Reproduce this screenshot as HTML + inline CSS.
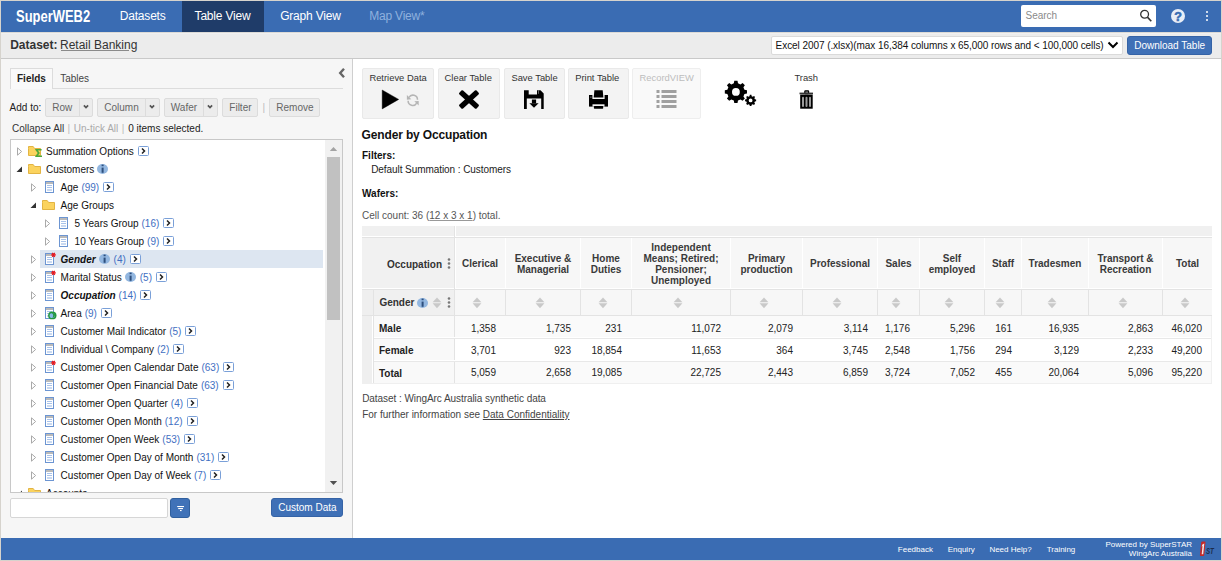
<!DOCTYPE html>
<html><head><meta charset="utf-8"><title>SuperWEB2</title>
<style>
html,body{margin:0;padding:0;}
body{width:1222px;height:561px;overflow:hidden;position:relative;font-family:"Liberation Sans", sans-serif;}
.b{position:absolute;}
.t{position:absolute;white-space:nowrap;font-family:"Liberation Sans", sans-serif;}
svg.b{overflow:visible;}
</style></head><body>
<div class="b" style="left:0px;top:0px;width:1222px;height:561px;background:#d6d3cd;"></div>
<div class="b" style="left:1px;top:1px;width:1220px;height:559px;background:#fff;"></div>
<div class="b" style="left:1px;top:1px;width:1220px;height:31px;background:#3a6cb3;"></div>
<div class="b" style="left:182px;top:1px;width:82px;height:31px;background:#1f3c69;"></div>
<div class="t" style="left:15.8px;top:6.5px;font-size:16px;line-height:20px;font-weight:700;color:#fff;transform:scaleX(0.81);transform-origin:0 0;">SuperWEB2</div>
<div class="t" style="left:119.80px;top:9.64px;font-size:12px;line-height:13.8px;color:#fff;letter-spacing:-0.2px;">Datasets</div>
<div class="t" style="left:194.60px;top:9.64px;font-size:12px;line-height:13.8px;color:#fff;letter-spacing:-0.2px;">Table View</div>
<div class="t" style="left:280.20px;top:9.64px;font-size:12px;line-height:13.8px;color:#fff;letter-spacing:-0.2px;">Graph View</div>
<div class="t" style="left:369.20px;top:9.64px;font-size:12px;line-height:13.8px;color:#8fb1de;letter-spacing:-0.2px;">Map View*</div>
<div class="b" style="left:1021px;top:5px;width:135px;height:22px;background:#fff;border-radius:2px;"></div>
<div class="t" style="left:1025.50px;top:10.48px;font-size:10px;line-height:11.5px;color:#8a8a8a;">Search</div>
<svg class="b" style="left:1138px;top:8px;" width="16" height="16" viewBox="0 0 16 16"><circle cx="6.6" cy="6.3" r="3.9" fill="none" stroke="#333" stroke-width="1.3"/><line x1="9.4" y1="9.1" x2="13.3" y2="13.2" stroke="#333" stroke-width="1.6"/></svg>
<svg class="b" style="left:1170px;top:8px;" width="16" height="16" viewBox="0 0 16 16"><circle cx="8" cy="8" r="7" fill="#e9eef7"/><text x="8" y="12.6" text-anchor="middle" font-family="Liberation Sans" font-weight="700" font-size="12.5" fill="#3a6cb3" stroke="#3a6cb3" stroke-width="0.6">?</text></svg>
<div class="b" style="left:1206px;top:10.8px;width:2.2px;height:2.2px;background:#fff;border-radius:1px;"></div>
<div class="b" style="left:1206px;top:14.8px;width:2.2px;height:2.2px;background:#fff;border-radius:1px;"></div>
<div class="b" style="left:1206px;top:18.9px;width:2.2px;height:2.2px;background:#fff;border-radius:1px;"></div>
<div class="b" style="left:1px;top:32px;width:1220px;height:26px;background:#ececec;"></div>
<div class="b" style="left:1px;top:32px;width:1220px;height:1px;background:#dcdad6;"></div>
<div class="b" style="left:1px;top:33px;width:1220px;height:1px;background:#f0f0f0;"></div>
<div class="b" style="left:1px;top:58px;width:1220px;height:1px;background:#c9c9c9;"></div>
<div class="t" style="left:10.20px;top:38.64px;font-size:12px;line-height:13.8px;color:#333;font-weight:700;">Dataset:</div>
<div class="t" style="left:60.00px;top:38.64px;font-size:12px;line-height:13.8px;color:#333;">Retail Banking</div>
<div class="b" style="left:60.5px;top:49.5px;width:68px;height:1px;background:#8a8a8a;"></div>
<div class="b" style="left:771px;top:36px;width:352px;height:19px;background:#fff;border:1px solid #dadada;border-radius:2px;box-sizing:border-box;"></div>
<div class="t" style="left:775.60px;top:40.39px;font-size:10px;line-height:11.5px;color:#111;letter-spacing:-0.065px;">Excel 2007 (.xlsx)(max 16,384 columns x 65,000 rows and &lt; 100,000 cells)</div>
<svg class="b" style="left:1107px;top:41px;" width="12" height="8" viewBox="0 0 12 8"><polyline points="1.5,1.5 6,6 10.5,1.5" fill="none" stroke="#000" stroke-width="2"/></svg>
<div class="b" style="left:1127px;top:36px;width:85px;height:19px;background:#3f70b6;border:1px solid #3563a6;border-radius:3px;box-sizing:border-box;"></div>
<div class="t" style="left:1134.20px;top:39.69px;font-size:10px;line-height:11.5px;color:#fff;">Download Table</div>
<div class="b" style="left:1px;top:59px;width:351px;height:479px;background:#f6f6f6;"></div>
<div class="b" style="left:352px;top:59px;width:1px;height:479px;background:#cfcfcf;"></div>
<div class="b" style="left:10px;top:88px;width:333px;height:1px;background:#dcdcdc;"></div>
<div class="b" style="left:10px;top:68px;width:43px;height:21px;background:#f9f9f9;border:1px solid #dcdcdc;border-bottom:none;box-sizing:border-box;"></div>
<div class="t" style="left:17.00px;top:72.58px;font-size:10px;line-height:11.5px;color:#222;font-weight:700;">Fields</div>
<div class="t" style="left:60.20px;top:72.58px;font-size:10px;line-height:11.5px;color:#444;">Tables</div>
<svg class="b" style="left:337px;top:67px;" width="10" height="12" viewBox="0 0 10 12"><polyline points="7,1.8 3.2,6 7,10.2" fill="none" stroke="#666" stroke-width="2.4"/></svg>
<div class="t" style="left:9.60px;top:102.48px;font-size:10px;line-height:11.5px;color:#222;">Add to:</div>
<div class="b" style="left:45px;top:98px;width:48px;height:19px;background:#ececec;border:1px solid #dcdcdc;border-radius:2px;box-sizing:border-box;"></div>
<div class="b" style="left:79px;top:98px;width:1px;height:19px;background:#dcdcdc;"></div>
<svg class="b" style="left:83px;top:103px;" width="9" height="7" viewBox="0 0 9 7"><polyline points="0.9,2.4 3,4.6 5.1,2.4" fill="none" stroke="#555" stroke-width="1.7"/></svg>
<div class="t" style="left:52.20px;top:102.48px;font-size:10px;line-height:11.5px;color:#666;">Row</div>
<div class="b" style="left:97px;top:98px;width:63px;height:19px;background:#ececec;border:1px solid #dcdcdc;border-radius:2px;box-sizing:border-box;"></div>
<div class="b" style="left:145px;top:98px;width:1px;height:19px;background:#dcdcdc;"></div>
<svg class="b" style="left:149px;top:103px;" width="9" height="7" viewBox="0 0 9 7"><polyline points="0.9,2.4 3,4.6 5.1,2.4" fill="none" stroke="#555" stroke-width="1.7"/></svg>
<div class="t" style="left:104.30px;top:102.48px;font-size:10px;line-height:11.5px;color:#666;">Column</div>
<div class="b" style="left:164px;top:98px;width:54px;height:19px;background:#ececec;border:1px solid #dcdcdc;border-radius:2px;box-sizing:border-box;"></div>
<div class="b" style="left:203px;top:98px;width:1px;height:19px;background:#dcdcdc;"></div>
<svg class="b" style="left:207px;top:103px;" width="9" height="7" viewBox="0 0 9 7"><polyline points="0.9,2.4 3,4.6 5.1,2.4" fill="none" stroke="#555" stroke-width="1.7"/></svg>
<div class="t" style="left:170.80px;top:102.48px;font-size:10px;line-height:11.5px;color:#666;">Wafer</div>
<div class="b" style="left:222px;top:98px;width:36px;height:19px;background:#ececec;border:1px solid #dcdcdc;border-radius:2px;box-sizing:border-box;"></div>
<div class="t" style="left:229.30px;top:102.48px;font-size:10px;line-height:11.5px;color:#666;">Filter</div>
<div class="t" style="left:262.40px;top:102.48px;font-size:10px;line-height:11.5px;color:#bbb;">|</div>
<div class="b" style="left:269px;top:98px;width:51px;height:19px;background:#ececec;border:1px solid #dcdcdc;border-radius:2px;box-sizing:border-box;"></div>
<div class="t" style="left:276.30px;top:102.48px;font-size:10px;line-height:11.5px;color:#666;">Remove</div>
<div class="t" style="left:12.00px;top:123.38px;font-size:10px;line-height:11.5px;color:#333;">Collapse All</div>
<div class="t" style="left:67.40px;top:123.38px;font-size:10px;line-height:11.5px;color:#bbb;">|</div>
<div class="t" style="left:73.80px;top:123.38px;font-size:10px;line-height:11.5px;color:#aaa;">Un-tick All</div>
<div class="t" style="left:121.80px;top:123.38px;font-size:10px;line-height:11.5px;color:#bbb;">|</div>
<div class="t" style="left:128.20px;top:123.38px;font-size:10px;line-height:11.5px;color:#222;">0 items selected.</div>
<div class="b" style="left:10px;top:139px;width:333px;height:354px;background:#fff;border:1px solid #c8c8c8;box-sizing:border-box;"></div>
<div class="b" style="left:11px;top:140px;width:314px;height:352px;overflow:hidden;">
<svg class="b" style="left:6px;top:7px;" width="6" height="9" viewBox="0 0 6 9"><polygon points="0.5,0.8 4.6,4.5 0.5,8.2" fill="none" stroke="#a9a9a9" stroke-width="1"/></svg>
<svg class="b" style="left:17px;top:6px;" width="15" height="12" viewBox="0 0 15 12"><path d="M0.5,2.5 L0.5,9.5 L12.5,9.5 L12.5,2.5 L6.6,2.5 L5.2,0.5 L0.5,0.5 Z" fill="#fbd35e" stroke="#e2b443" stroke-width="1"/><path d="M7.2,3 H13.6 V4.5 L9.9,4.5 L11.9,7 L9.9,9.4 L14,9.4 V11 H7.2 L7.2,10.2 L9.7,7 L7.2,3.8Z" fill="#4ea83a"/></svg>
<div class="t" style="left:35.00px;top:4.70px;font-size:10px;line-height:13px;color:#111;"><span style="">Summation Options</span><svg width="11" height="10" viewBox="0 0 11 10" style="vertical-align:-1px;margin-left:4px"><rect x="0.5" y="0.5" width="10" height="9" rx="1" fill="#fff" stroke="#7aa0d8"/><polyline points="4,2.5 6.5,5 4,7.5" fill="none" stroke="#222" stroke-width="1.5"/></svg></div>
<svg class="b" style="left:5px;top:26px;" width="7" height="7" viewBox="0 0 7 7"><polygon points="6,0.5 6,6 0.5,6" fill="#333"/></svg>
<svg class="b" style="left:17px;top:24px;" width="15" height="12" viewBox="0 0 15 12"><path d="M0.5,2.5 L0.5,9.5 L12.5,9.5 L12.5,2.5 L6.6,2.5 L5.2,0.5 L0.5,0.5 Z" fill="#fbd35e" stroke="#e2b443" stroke-width="1"/></svg>
<div class="t" style="left:35.00px;top:22.70px;font-size:10px;line-height:13px;color:#111;"><span style="">Customers</span><svg width="11" height="10" viewBox="0 0 11 10" style="vertical-align:-1px;margin-left:3px"><ellipse cx="5.5" cy="5" rx="5.5" ry="5" fill="#93b7e0"/><rect x="4.6" y="3.6" width="2" height="5.2" fill="#2d4f7d"/><rect x="4.6" y="0.6" width="2" height="1.6" fill="#2d4f7d"/></svg></div>
<svg class="b" style="left:20px;top:43px;" width="6" height="9" viewBox="0 0 6 9"><polygon points="0.5,0.8 4.6,4.5 0.5,8.2" fill="none" stroke="#a9a9a9" stroke-width="1"/></svg>
<svg class="b" style="left:34px;top:41px;" width="12" height="13" viewBox="0 0 12 13"><rect x="0.5" y="0.5" width="8" height="11" fill="#fff" stroke="#6c95d2" stroke-width="1"/><rect x="1" y="1" width="7" height="2" fill="#b9b9b9"/><rect x="2" y="4" width="5" height="1" fill="#a9c3ea"/><rect x="2" y="6" width="5" height="1" fill="#a9c3ea"/><rect x="2" y="8" width="5" height="2" fill="#c9d9f1"/></svg>
<div class="t" style="left:49.60px;top:40.70px;font-size:10px;line-height:13px;color:#111;"><span style="">Age</span><span style="color:#3f6fc2;margin-left:3px">(99)</span><svg width="11" height="10" viewBox="0 0 11 10" style="vertical-align:-1px;margin-left:4px"><rect x="0.5" y="0.5" width="10" height="9" rx="1" fill="#fff" stroke="#7aa0d8"/><polyline points="4,2.5 6.5,5 4,7.5" fill="none" stroke="#222" stroke-width="1.5"/></svg></div>
<svg class="b" style="left:19px;top:62px;" width="7" height="7" viewBox="0 0 7 7"><polygon points="6,0.5 6,6 0.5,6" fill="#333"/></svg>
<svg class="b" style="left:31px;top:60px;" width="15" height="12" viewBox="0 0 15 12"><path d="M0.5,2.5 L0.5,9.5 L12.5,9.5 L12.5,2.5 L6.6,2.5 L5.2,0.5 L0.5,0.5 Z" fill="#fbd35e" stroke="#e2b443" stroke-width="1"/></svg>
<div class="t" style="left:49.60px;top:58.70px;font-size:10px;line-height:13px;color:#111;"><span style="">Age Groups</span></div>
<svg class="b" style="left:34px;top:79px;" width="6" height="9" viewBox="0 0 6 9"><polygon points="0.5,0.8 4.6,4.5 0.5,8.2" fill="none" stroke="#a9a9a9" stroke-width="1"/></svg>
<svg class="b" style="left:48px;top:77px;" width="12" height="13" viewBox="0 0 12 13"><rect x="0.5" y="0.5" width="8" height="11" fill="#fff" stroke="#6c95d2" stroke-width="1"/><rect x="1" y="1" width="7" height="2" fill="#b9b9b9"/><rect x="2" y="4" width="5" height="1" fill="#a9c3ea"/><rect x="2" y="6" width="5" height="1" fill="#a9c3ea"/><rect x="2" y="8" width="5" height="2" fill="#c9d9f1"/></svg>
<div class="t" style="left:63.60px;top:76.70px;font-size:10px;line-height:13px;color:#111;"><span style="">5 Years Group</span><span style="color:#3f6fc2;margin-left:3px">(16)</span><svg width="11" height="10" viewBox="0 0 11 10" style="vertical-align:-1px;margin-left:4px"><rect x="0.5" y="0.5" width="10" height="9" rx="1" fill="#fff" stroke="#7aa0d8"/><polyline points="4,2.5 6.5,5 4,7.5" fill="none" stroke="#222" stroke-width="1.5"/></svg></div>
<svg class="b" style="left:34px;top:97px;" width="6" height="9" viewBox="0 0 6 9"><polygon points="0.5,0.8 4.6,4.5 0.5,8.2" fill="none" stroke="#a9a9a9" stroke-width="1"/></svg>
<svg class="b" style="left:48px;top:95px;" width="12" height="13" viewBox="0 0 12 13"><rect x="0.5" y="0.5" width="8" height="11" fill="#fff" stroke="#6c95d2" stroke-width="1"/><rect x="1" y="1" width="7" height="2" fill="#b9b9b9"/><rect x="2" y="4" width="5" height="1" fill="#a9c3ea"/><rect x="2" y="6" width="5" height="1" fill="#a9c3ea"/><rect x="2" y="8" width="5" height="2" fill="#c9d9f1"/></svg>
<div class="t" style="left:63.60px;top:94.70px;font-size:10px;line-height:13px;color:#111;"><span style="">10 Years Group</span><span style="color:#3f6fc2;margin-left:3px">(9)</span><svg width="11" height="10" viewBox="0 0 11 10" style="vertical-align:-1px;margin-left:4px"><rect x="0.5" y="0.5" width="10" height="9" rx="1" fill="#fff" stroke="#7aa0d8"/><polyline points="4,2.5 6.5,5 4,7.5" fill="none" stroke="#222" stroke-width="1.5"/></svg></div>
<div class="b" style="left:29px;top:110px;width:283px;height:18px;background:#dde6f1;"></div>
<svg class="b" style="left:20px;top:115px;" width="6" height="9" viewBox="0 0 6 9"><polygon points="0.5,0.8 4.6,4.5 0.5,8.2" fill="none" stroke="#a9a9a9" stroke-width="1"/></svg>
<svg class="b" style="left:34px;top:113px;" width="12" height="13" viewBox="0 0 12 13"><rect x="0.5" y="0.5" width="8" height="11" fill="#fff" stroke="#6c95d2" stroke-width="1"/><rect x="1" y="1" width="7" height="2" fill="#b9b9b9"/><rect x="2" y="4" width="5" height="1" fill="#a9c3ea"/><rect x="2" y="6" width="5" height="1" fill="#a9c3ea"/><rect x="2" y="8" width="5" height="2" fill="#c9d9f1"/><g transform="translate(8.5,1.9)" stroke="#e8151b" stroke-width="1.3"><line x1="-2.3" y1="0" x2="2.3" y2="0"/><line x1="-1.2" y1="-2" x2="1.2" y2="2"/><line x1="-1.2" y1="2" x2="1.2" y2="-2"/></g></svg>
<div class="t" style="left:49.60px;top:112.70px;font-size:10px;line-height:13px;color:#111;"><span style="font-weight:700;font-style:italic;">Gender</span><svg width="11" height="10" viewBox="0 0 11 10" style="vertical-align:-1px;margin-left:3px"><ellipse cx="5.5" cy="5" rx="5.5" ry="5" fill="#93b7e0"/><rect x="4.6" y="3.6" width="2" height="5.2" fill="#2d4f7d"/><rect x="4.6" y="0.6" width="2" height="1.6" fill="#2d4f7d"/></svg><span style="color:#3f6fc2;margin-left:4px">(4)</span><svg width="11" height="10" viewBox="0 0 11 10" style="vertical-align:-1px;margin-left:4px"><rect x="0.5" y="0.5" width="10" height="9" rx="1" fill="#fff" stroke="#7aa0d8"/><polyline points="4,2.5 6.5,5 4,7.5" fill="none" stroke="#222" stroke-width="1.5"/></svg></div>
<svg class="b" style="left:20px;top:133px;" width="6" height="9" viewBox="0 0 6 9"><polygon points="0.5,0.8 4.6,4.5 0.5,8.2" fill="none" stroke="#a9a9a9" stroke-width="1"/></svg>
<svg class="b" style="left:34px;top:131px;" width="12" height="13" viewBox="0 0 12 13"><rect x="0.5" y="0.5" width="8" height="11" fill="#fff" stroke="#6c95d2" stroke-width="1"/><rect x="1" y="1" width="7" height="2" fill="#b9b9b9"/><rect x="2" y="4" width="5" height="1" fill="#a9c3ea"/><rect x="2" y="6" width="5" height="1" fill="#a9c3ea"/><rect x="2" y="8" width="5" height="2" fill="#c9d9f1"/><g transform="translate(8.5,1.9)" stroke="#e8151b" stroke-width="1.3"><line x1="-2.3" y1="0" x2="2.3" y2="0"/><line x1="-1.2" y1="-2" x2="1.2" y2="2"/><line x1="-1.2" y1="2" x2="1.2" y2="-2"/></g></svg>
<div class="t" style="left:49.60px;top:130.70px;font-size:10px;line-height:13px;color:#111;"><span style="">Marital Status</span><svg width="11" height="10" viewBox="0 0 11 10" style="vertical-align:-1px;margin-left:3px"><ellipse cx="5.5" cy="5" rx="5.5" ry="5" fill="#93b7e0"/><rect x="4.6" y="3.6" width="2" height="5.2" fill="#2d4f7d"/><rect x="4.6" y="0.6" width="2" height="1.6" fill="#2d4f7d"/></svg><span style="color:#3f6fc2;margin-left:4px">(5)</span><svg width="11" height="10" viewBox="0 0 11 10" style="vertical-align:-1px;margin-left:4px"><rect x="0.5" y="0.5" width="10" height="9" rx="1" fill="#fff" stroke="#7aa0d8"/><polyline points="4,2.5 6.5,5 4,7.5" fill="none" stroke="#222" stroke-width="1.5"/></svg></div>
<svg class="b" style="left:20px;top:151px;" width="6" height="9" viewBox="0 0 6 9"><polygon points="0.5,0.8 4.6,4.5 0.5,8.2" fill="none" stroke="#a9a9a9" stroke-width="1"/></svg>
<svg class="b" style="left:34px;top:149px;" width="12" height="13" viewBox="0 0 12 13"><rect x="0.5" y="0.5" width="8" height="11" fill="#fff" stroke="#6c95d2" stroke-width="1"/><rect x="1" y="1" width="7" height="2" fill="#b9b9b9"/><rect x="2" y="4" width="5" height="1" fill="#a9c3ea"/><rect x="2" y="6" width="5" height="1" fill="#a9c3ea"/><rect x="2" y="8" width="5" height="2" fill="#c9d9f1"/></svg>
<div class="t" style="left:49.60px;top:148.70px;font-size:10px;line-height:13px;color:#111;"><span style="font-weight:700;font-style:italic;">Occupation</span><span style="color:#3f6fc2;margin-left:3px">(14)</span><svg width="11" height="10" viewBox="0 0 11 10" style="vertical-align:-1px;margin-left:4px"><rect x="0.5" y="0.5" width="10" height="9" rx="1" fill="#fff" stroke="#7aa0d8"/><polyline points="4,2.5 6.5,5 4,7.5" fill="none" stroke="#222" stroke-width="1.5"/></svg></div>
<svg class="b" style="left:20px;top:169px;" width="6" height="9" viewBox="0 0 6 9"><polygon points="0.5,0.8 4.6,4.5 0.5,8.2" fill="none" stroke="#a9a9a9" stroke-width="1"/></svg>
<svg class="b" style="left:34px;top:167px;" width="12" height="13" viewBox="0 0 12 13"><rect x="0.5" y="0.5" width="8" height="11" fill="#fff" stroke="#6c95d2" stroke-width="1"/><rect x="1" y="1" width="7" height="2" fill="#b9b9b9"/><rect x="2" y="4" width="5" height="1" fill="#a9c3ea"/><rect x="2" y="6" width="5" height="1" fill="#a9c3ea"/><rect x="2" y="8" width="5" height="2" fill="#c9d9f1"/><ellipse cx="7.3" cy="8.4" rx="4.2" ry="3.9" fill="#23983f"/><circle cx="7.2" cy="8.5" r="2.6" fill="#86b9e8"/><path d="M6.2,6 Q9.5,7.2 7.4,10.9 Q10.2,10.2 9.9,7 Q8.5,5.6 6.2,6Z" fill="#23983f"/></svg>
<div class="t" style="left:49.60px;top:166.70px;font-size:10px;line-height:13px;color:#111;"><span style="">Area</span><span style="color:#3f6fc2;margin-left:3px">(9)</span><svg width="11" height="10" viewBox="0 0 11 10" style="vertical-align:-1px;margin-left:4px"><rect x="0.5" y="0.5" width="10" height="9" rx="1" fill="#fff" stroke="#7aa0d8"/><polyline points="4,2.5 6.5,5 4,7.5" fill="none" stroke="#222" stroke-width="1.5"/></svg></div>
<svg class="b" style="left:20px;top:187px;" width="6" height="9" viewBox="0 0 6 9"><polygon points="0.5,0.8 4.6,4.5 0.5,8.2" fill="none" stroke="#a9a9a9" stroke-width="1"/></svg>
<svg class="b" style="left:34px;top:185px;" width="12" height="13" viewBox="0 0 12 13"><rect x="0.5" y="0.5" width="8" height="11" fill="#fff" stroke="#6c95d2" stroke-width="1"/><rect x="1" y="1" width="7" height="2" fill="#b9b9b9"/><rect x="2" y="4" width="5" height="1" fill="#a9c3ea"/><rect x="2" y="6" width="5" height="1" fill="#a9c3ea"/><rect x="2" y="8" width="5" height="2" fill="#c9d9f1"/></svg>
<div class="t" style="left:49.60px;top:184.70px;font-size:10px;line-height:13px;color:#111;"><span style="">Customer Mail Indicator</span><span style="color:#3f6fc2;margin-left:3px">(5)</span><svg width="11" height="10" viewBox="0 0 11 10" style="vertical-align:-1px;margin-left:4px"><rect x="0.5" y="0.5" width="10" height="9" rx="1" fill="#fff" stroke="#7aa0d8"/><polyline points="4,2.5 6.5,5 4,7.5" fill="none" stroke="#222" stroke-width="1.5"/></svg></div>
<svg class="b" style="left:20px;top:205px;" width="6" height="9" viewBox="0 0 6 9"><polygon points="0.5,0.8 4.6,4.5 0.5,8.2" fill="none" stroke="#a9a9a9" stroke-width="1"/></svg>
<svg class="b" style="left:34px;top:203px;" width="12" height="13" viewBox="0 0 12 13"><rect x="0.5" y="0.5" width="8" height="11" fill="#fff" stroke="#6c95d2" stroke-width="1"/><rect x="1" y="1" width="7" height="2" fill="#b9b9b9"/><rect x="2" y="4" width="5" height="1" fill="#a9c3ea"/><rect x="2" y="6" width="5" height="1" fill="#a9c3ea"/><rect x="2" y="8" width="5" height="2" fill="#c9d9f1"/></svg>
<div class="t" style="left:49.60px;top:202.70px;font-size:10px;line-height:13px;color:#111;"><span style="">Individual \ Company</span><span style="color:#3f6fc2;margin-left:3px">(2)</span><svg width="11" height="10" viewBox="0 0 11 10" style="vertical-align:-1px;margin-left:4px"><rect x="0.5" y="0.5" width="10" height="9" rx="1" fill="#fff" stroke="#7aa0d8"/><polyline points="4,2.5 6.5,5 4,7.5" fill="none" stroke="#222" stroke-width="1.5"/></svg></div>
<svg class="b" style="left:20px;top:223px;" width="6" height="9" viewBox="0 0 6 9"><polygon points="0.5,0.8 4.6,4.5 0.5,8.2" fill="none" stroke="#a9a9a9" stroke-width="1"/></svg>
<svg class="b" style="left:34px;top:221px;" width="12" height="13" viewBox="0 0 12 13"><rect x="0.5" y="0.5" width="8" height="11" fill="#fff" stroke="#6c95d2" stroke-width="1"/><rect x="1" y="1" width="7" height="2" fill="#b9b9b9"/><rect x="2" y="4" width="5" height="1" fill="#a9c3ea"/><rect x="2" y="6" width="5" height="1" fill="#a9c3ea"/><rect x="2" y="8" width="5" height="2" fill="#c9d9f1"/><g transform="translate(8.5,1.9)" stroke="#e8151b" stroke-width="1.3"><line x1="-2.3" y1="0" x2="2.3" y2="0"/><line x1="-1.2" y1="-2" x2="1.2" y2="2"/><line x1="-1.2" y1="2" x2="1.2" y2="-2"/></g></svg>
<div class="t" style="left:49.60px;top:220.70px;font-size:10px;line-height:13px;color:#111;"><span style="">Customer Open Calendar Date</span><span style="color:#3f6fc2;margin-left:3px">(63)</span><svg width="11" height="10" viewBox="0 0 11 10" style="vertical-align:-1px;margin-left:4px"><rect x="0.5" y="0.5" width="10" height="9" rx="1" fill="#fff" stroke="#7aa0d8"/><polyline points="4,2.5 6.5,5 4,7.5" fill="none" stroke="#222" stroke-width="1.5"/></svg></div>
<svg class="b" style="left:20px;top:241px;" width="6" height="9" viewBox="0 0 6 9"><polygon points="0.5,0.8 4.6,4.5 0.5,8.2" fill="none" stroke="#a9a9a9" stroke-width="1"/></svg>
<svg class="b" style="left:34px;top:239px;" width="12" height="13" viewBox="0 0 12 13"><rect x="0.5" y="0.5" width="8" height="11" fill="#fff" stroke="#6c95d2" stroke-width="1"/><rect x="1" y="1" width="7" height="2" fill="#b9b9b9"/><rect x="2" y="4" width="5" height="1" fill="#a9c3ea"/><rect x="2" y="6" width="5" height="1" fill="#a9c3ea"/><rect x="2" y="8" width="5" height="2" fill="#c9d9f1"/></svg>
<div class="t" style="left:49.60px;top:238.70px;font-size:10px;line-height:13px;color:#111;"><span style="">Customer Open Financial Date</span><span style="color:#3f6fc2;margin-left:3px">(63)</span><svg width="11" height="10" viewBox="0 0 11 10" style="vertical-align:-1px;margin-left:4px"><rect x="0.5" y="0.5" width="10" height="9" rx="1" fill="#fff" stroke="#7aa0d8"/><polyline points="4,2.5 6.5,5 4,7.5" fill="none" stroke="#222" stroke-width="1.5"/></svg></div>
<svg class="b" style="left:20px;top:259px;" width="6" height="9" viewBox="0 0 6 9"><polygon points="0.5,0.8 4.6,4.5 0.5,8.2" fill="none" stroke="#a9a9a9" stroke-width="1"/></svg>
<svg class="b" style="left:34px;top:257px;" width="12" height="13" viewBox="0 0 12 13"><rect x="0.5" y="0.5" width="8" height="11" fill="#fff" stroke="#6c95d2" stroke-width="1"/><rect x="1" y="1" width="7" height="2" fill="#b9b9b9"/><rect x="2" y="4" width="5" height="1" fill="#a9c3ea"/><rect x="2" y="6" width="5" height="1" fill="#a9c3ea"/><rect x="2" y="8" width="5" height="2" fill="#c9d9f1"/></svg>
<div class="t" style="left:49.60px;top:256.70px;font-size:10px;line-height:13px;color:#111;"><span style="">Customer Open Quarter</span><span style="color:#3f6fc2;margin-left:3px">(4)</span><svg width="11" height="10" viewBox="0 0 11 10" style="vertical-align:-1px;margin-left:4px"><rect x="0.5" y="0.5" width="10" height="9" rx="1" fill="#fff" stroke="#7aa0d8"/><polyline points="4,2.5 6.5,5 4,7.5" fill="none" stroke="#222" stroke-width="1.5"/></svg></div>
<svg class="b" style="left:20px;top:277px;" width="6" height="9" viewBox="0 0 6 9"><polygon points="0.5,0.8 4.6,4.5 0.5,8.2" fill="none" stroke="#a9a9a9" stroke-width="1"/></svg>
<svg class="b" style="left:34px;top:275px;" width="12" height="13" viewBox="0 0 12 13"><rect x="0.5" y="0.5" width="8" height="11" fill="#fff" stroke="#6c95d2" stroke-width="1"/><rect x="1" y="1" width="7" height="2" fill="#b9b9b9"/><rect x="2" y="4" width="5" height="1" fill="#a9c3ea"/><rect x="2" y="6" width="5" height="1" fill="#a9c3ea"/><rect x="2" y="8" width="5" height="2" fill="#c9d9f1"/></svg>
<div class="t" style="left:49.60px;top:274.70px;font-size:10px;line-height:13px;color:#111;"><span style="">Customer Open Month</span><span style="color:#3f6fc2;margin-left:3px">(12)</span><svg width="11" height="10" viewBox="0 0 11 10" style="vertical-align:-1px;margin-left:4px"><rect x="0.5" y="0.5" width="10" height="9" rx="1" fill="#fff" stroke="#7aa0d8"/><polyline points="4,2.5 6.5,5 4,7.5" fill="none" stroke="#222" stroke-width="1.5"/></svg></div>
<svg class="b" style="left:20px;top:295px;" width="6" height="9" viewBox="0 0 6 9"><polygon points="0.5,0.8 4.6,4.5 0.5,8.2" fill="none" stroke="#a9a9a9" stroke-width="1"/></svg>
<svg class="b" style="left:34px;top:293px;" width="12" height="13" viewBox="0 0 12 13"><rect x="0.5" y="0.5" width="8" height="11" fill="#fff" stroke="#6c95d2" stroke-width="1"/><rect x="1" y="1" width="7" height="2" fill="#b9b9b9"/><rect x="2" y="4" width="5" height="1" fill="#a9c3ea"/><rect x="2" y="6" width="5" height="1" fill="#a9c3ea"/><rect x="2" y="8" width="5" height="2" fill="#c9d9f1"/></svg>
<div class="t" style="left:49.60px;top:292.70px;font-size:10px;line-height:13px;color:#111;"><span style="">Customer Open Week</span><span style="color:#3f6fc2;margin-left:3px">(53)</span><svg width="11" height="10" viewBox="0 0 11 10" style="vertical-align:-1px;margin-left:4px"><rect x="0.5" y="0.5" width="10" height="9" rx="1" fill="#fff" stroke="#7aa0d8"/><polyline points="4,2.5 6.5,5 4,7.5" fill="none" stroke="#222" stroke-width="1.5"/></svg></div>
<svg class="b" style="left:20px;top:313px;" width="6" height="9" viewBox="0 0 6 9"><polygon points="0.5,0.8 4.6,4.5 0.5,8.2" fill="none" stroke="#a9a9a9" stroke-width="1"/></svg>
<svg class="b" style="left:34px;top:311px;" width="12" height="13" viewBox="0 0 12 13"><rect x="0.5" y="0.5" width="8" height="11" fill="#fff" stroke="#6c95d2" stroke-width="1"/><rect x="1" y="1" width="7" height="2" fill="#b9b9b9"/><rect x="2" y="4" width="5" height="1" fill="#a9c3ea"/><rect x="2" y="6" width="5" height="1" fill="#a9c3ea"/><rect x="2" y="8" width="5" height="2" fill="#c9d9f1"/></svg>
<div class="t" style="left:49.60px;top:310.70px;font-size:10px;line-height:13px;color:#111;"><span style="">Customer Open Day of Month</span><span style="color:#3f6fc2;margin-left:3px">(31)</span><svg width="11" height="10" viewBox="0 0 11 10" style="vertical-align:-1px;margin-left:4px"><rect x="0.5" y="0.5" width="10" height="9" rx="1" fill="#fff" stroke="#7aa0d8"/><polyline points="4,2.5 6.5,5 4,7.5" fill="none" stroke="#222" stroke-width="1.5"/></svg></div>
<svg class="b" style="left:20px;top:331px;" width="6" height="9" viewBox="0 0 6 9"><polygon points="0.5,0.8 4.6,4.5 0.5,8.2" fill="none" stroke="#a9a9a9" stroke-width="1"/></svg>
<svg class="b" style="left:34px;top:329px;" width="12" height="13" viewBox="0 0 12 13"><rect x="0.5" y="0.5" width="8" height="11" fill="#fff" stroke="#6c95d2" stroke-width="1"/><rect x="1" y="1" width="7" height="2" fill="#b9b9b9"/><rect x="2" y="4" width="5" height="1" fill="#a9c3ea"/><rect x="2" y="6" width="5" height="1" fill="#a9c3ea"/><rect x="2" y="8" width="5" height="2" fill="#c9d9f1"/></svg>
<div class="t" style="left:49.60px;top:328.70px;font-size:10px;line-height:13px;color:#111;"><span style="">Customer Open Day of Week</span><span style="color:#3f6fc2;margin-left:3px">(7)</span><svg width="11" height="10" viewBox="0 0 11 10" style="vertical-align:-1px;margin-left:4px"><rect x="0.5" y="0.5" width="10" height="9" rx="1" fill="#fff" stroke="#7aa0d8"/><polyline points="4,2.5 6.5,5 4,7.5" fill="none" stroke="#222" stroke-width="1.5"/></svg></div>
<svg class="b" style="left:5px;top:350px;" width="7" height="7" viewBox="0 0 7 7"><polygon points="6,0.5 6,6 0.5,6" fill="#333"/></svg>
<svg class="b" style="left:17px;top:348px;" width="15" height="12" viewBox="0 0 15 12"><path d="M0.5,2.5 L0.5,9.5 L12.5,9.5 L12.5,2.5 L6.6,2.5 L5.2,0.5 L0.5,0.5 Z" fill="#fbd35e" stroke="#e2b443" stroke-width="1"/></svg>
<div class="t" style="left:35.00px;top:346.70px;font-size:10px;line-height:13px;color:#111;"><span style="">Accounts</span></div>
</div>
<div class="b" style="left:325px;top:140px;width:17px;height:352px;background:#f1f1f1;"></div>
<div class="b" style="left:327px;top:157px;width:13px;height:163px;background:#c1c1c1;"></div>
<svg class="b" style="left:329px;top:146px;" width="9" height="6" viewBox="0 0 9 6"><polygon points="0.8,5 4.5,1 8.2,5" fill="#a3a3a3"/></svg>
<svg class="b" style="left:329px;top:480px;" width="9" height="6" viewBox="0 0 9 6"><polygon points="0.8,1 4.5,5 8.2,1" fill="#505050"/></svg>
<div class="b" style="left:10px;top:498px;width:158px;height:20px;background:#fff;border:1px solid #d6d6d6;border-radius:2px;box-sizing:border-box;"></div>
<div class="b" style="left:170px;top:498px;width:20px;height:20px;background:#4072b8;border:1px solid #30609f;border-radius:3px;box-sizing:border-box;"></div>
<svg class="b" style="left:175px;top:503px;" width="10" height="10" viewBox="0 0 10 10"><rect x="2.2" y="3" width="6.8" height="1.1" fill="#fff"/><rect x="3.2" y="5" width="4.8" height="1.1" fill="#fff"/><rect x="5" y="7" width="1.6" height="1.1" fill="#fff"/></svg>
<div class="b" style="left:271px;top:498px;width:72px;height:19px;background:#3f70b6;border:1px solid #3563a6;border-radius:3px;box-sizing:border-box;"></div>
<div class="t" style="left:278.20px;top:501.99px;font-size:10px;line-height:11.5px;color:#fff;">Custom Data</div>
<div class="b" style="left:362px;top:68px;width:72px;height:51px;background:#f3f3f3;border:1px solid #e9e9e9;border-radius:2px;box-sizing:border-box;"></div>
<div class="t" style="left:369.40px;top:70.8px;font-size:9.4px;line-height:13px;color:#333;">Retrieve Data</div>
<div class="b" style="left:438px;top:68px;width:62px;height:51px;background:#f3f3f3;border:1px solid #e9e9e9;border-radius:2px;box-sizing:border-box;"></div>
<div class="t" style="left:444.60px;top:70.8px;font-size:9.4px;line-height:13px;color:#333;">Clear Table</div>
<div class="b" style="left:504px;top:68px;width:61px;height:51px;background:#f3f3f3;border:1px solid #e9e9e9;border-radius:2px;box-sizing:border-box;"></div>
<div class="t" style="left:511.40px;top:70.8px;font-size:9.4px;line-height:13px;color:#333;">Save Table</div>
<div class="b" style="left:568px;top:68px;width:61px;height:51px;background:#f3f3f3;border:1px solid #e9e9e9;border-radius:2px;box-sizing:border-box;"></div>
<div class="t" style="left:575.20px;top:70.8px;font-size:9.4px;line-height:13px;color:#333;">Print Table</div>
<div class="b" style="left:632px;top:68px;width:69px;height:51px;background:#f3f3f3;border:1px solid #e9e9e9;border-radius:2px;box-sizing:border-box;background:#f9f9f9;border-color:#eeeeee;"></div>
<div class="t" style="left:639.60px;top:70.8px;font-size:9.4px;line-height:13px;color:#bdbdbd;">RecordVIEW</div>
<div class="t" style="left:794.4px;top:70.8px;font-size:9.4px;line-height:13px;color:#333;">Trash</div>
<svg class="b" style="left:381px;top:89px;" width="20" height="21" viewBox="0 0 20 21"><polygon points="1.2,1 17.7,10.4 1.2,19.9" fill="#000" stroke="#000" stroke-width="0.4" stroke-linejoin="round"/></svg>
<svg class="b" style="left:405px;top:93px;" width="16" height="14" viewBox="0 0 16 14"><g transform="translate(15.5,0.3) scale(-1,1)"><path d="M3,6.5 A4.6,4.6 0 0 1 11.6,4.2" fill="none" stroke="#b5b5b5" stroke-width="1.5"/><polygon points="13.6,1.8 13.6,6.4 9.2,6" fill="#b5b5b5"/><path d="M12.4,7.5 A4.6,4.6 0 0 1 3.8,9.8" fill="none" stroke="#b5b5b5" stroke-width="1.5"/><polygon points="1.8,12.2 1.8,7.6 6.2,8" fill="#b5b5b5"/></g></svg>
<svg class="b" style="left:458px;top:89px;" width="22" height="21" viewBox="0 0 22 21"><g fill="#000" transform="translate(11,10.5)"><rect x="-11.6" y="-2.7" width="23.2" height="5.4" rx="1.2" transform="rotate(42)"/><rect x="-11.6" y="-2.7" width="23.2" height="5.4" rx="1.2" transform="rotate(-42)"/></g></svg>
<svg class="b" style="left:523px;top:89px;" width="22" height="21" viewBox="0 0 22 21"><path d="M1,1.2 H5.7 V5.6 H14 V1.2 H17.5 L20.7,4.5 V20 H18.2 V9.5 H3.8 V20 H1 Z" fill="#000"/><rect x="15.2" y="1.2" width="0.8" height="3.6" fill="#777"/><rect x="8.9" y="10.5" width="4.2" height="3.9" fill="#000"/><polygon points="6.4,14.2 15.6,14.2 11,18.8" fill="#000"/></svg>
<svg class="b" style="left:588px;top:89px;" width="21" height="21" viewBox="0 0 21 21"><rect x="1" y="6" width="19" height="11.6" fill="#000"/><rect x="4.4" y="4" width="12.2" height="6" fill="#f3f3f3"/><polygon points="6.4,1.2 14.7,1.2 15.4,8.4 5.7,8.4" fill="#000"/><rect x="4.5" y="15.3" width="12" height="2.4" fill="#f3f3f3"/><rect x="5.9" y="16.9" width="9.3" height="2.8" rx="0.6" fill="#000"/><circle cx="2.9" cy="8.1" r="0.7" fill="#8a8a8a"/></svg>
<svg class="b" style="left:656px;top:89px;" width="21" height="20" viewBox="0 0 21 20"><rect x="0.5" y="1" width="3" height="3" fill="#a0a0a0"/><rect x="5.5" y="1" width="15" height="3" fill="#a0a0a0"/><rect x="0.5" y="6" width="3" height="3" fill="#a0a0a0"/><rect x="5.5" y="6" width="15" height="3" fill="#a0a0a0"/><rect x="0.5" y="11" width="3" height="3" fill="#a0a0a0"/><rect x="5.5" y="11" width="15" height="3" fill="#a0a0a0"/><rect x="0.5" y="16" width="3" height="3" fill="#a0a0a0"/><rect x="5.5" y="16" width="15" height="3" fill="#a0a0a0"/></svg>
<svg class="b" style="left:722px;top:78px;" width="40" height="32" viewBox="0 0 40 32"><path d="M22.45,11.81 L24.98,12.29 L24.98,15.51 L22.45,15.99 L21.42,18.47 L22.87,20.60 L20.60,22.87 L18.47,21.42 L15.99,22.45 L15.51,24.98 L12.29,24.98 L11.81,22.45 L9.33,21.42 L7.20,22.87 L4.93,20.60 L6.38,18.47 L5.35,15.99 L2.82,15.51 L2.82,12.29 L5.35,11.81 L6.38,9.33 L4.93,7.20 L7.20,4.93 L9.33,6.38 L11.81,5.35 L12.29,2.82 L15.51,2.82 L15.99,5.35 L18.47,6.38 L20.60,4.93 L22.87,7.20 L21.42,9.33 Z M17.8,13.9 A3.9,3.9 0 1 0 10.0,13.9 A3.9,3.9 0 1 0 17.8,13.9 Z" fill="#000" fill-rule="evenodd"/><path d="M32.87,21.35 L34.14,21.60 L34.14,23.20 L32.87,23.45 L32.36,24.68 L33.09,25.75 L31.95,26.89 L30.88,26.16 L29.65,26.67 L29.40,27.94 L27.80,27.94 L27.55,26.67 L26.32,26.16 L25.25,26.89 L24.11,25.75 L24.84,24.68 L24.33,23.45 L23.06,23.20 L23.06,21.60 L24.33,21.35 L24.84,20.12 L24.11,19.05 L25.25,17.91 L26.32,18.64 L27.55,18.13 L27.80,16.86 L29.40,16.86 L29.65,18.13 L30.88,18.64 L31.95,17.91 L33.09,19.05 L32.36,20.12 Z M30.5,22.4 A1.9,1.9 0 1 0 26.700000000000003,22.4 A1.9,1.9 0 1 0 30.5,22.4 Z" fill="#000" fill-rule="evenodd"/></svg>
<svg class="b" style="left:797px;top:89px;" width="18" height="22" viewBox="0 0 18 22"><rect x="7.8" y="1.8" width="3.8" height="2.8" rx="0.6" fill="#8a8a8a" stroke="#000" stroke-width="1.2"/><rect x="2.5" y="3.6" width="13.5" height="1.7" fill="#333"/><rect x="3.2" y="5.6" width="12.5" height="14.1" fill="#000"/><rect x="5" y="7.7" width="2" height="10.3" rx="1" fill="#9a9a9a"/><rect x="8.5" y="7.7" width="2" height="10.3" rx="1" fill="#9a9a9a"/><rect x="12" y="7.7" width="2" height="10.3" rx="1" fill="#9a9a9a"/></svg>
<div class="t" style="left:361.60px;top:128.64px;font-size:12px;line-height:13.8px;color:#111;font-weight:700;letter-spacing:-0.15px;">Gender by Occupation</div>
<div class="t" style="left:362.00px;top:150.48px;font-size:10px;line-height:11.5px;color:#111;font-weight:700;">Filters:</div>
<div class="t" style="left:371.20px;top:164.28px;font-size:10px;line-height:11.5px;color:#222;letter-spacing:-0.07px;">Default Summation : Customers</div>
<div class="t" style="left:362.00px;top:188.09px;font-size:10px;line-height:11.5px;color:#111;font-weight:700;">Wafers:</div>
<div class="t" style="left:362.00px;top:210.38px;font-size:10px;line-height:11.5px;color:#555;">Cell count: 36 (<span style="text-decoration:underline;text-decoration-color:#999;">12 x 3 x 1</span>) total.</div>
<div class="b" style="left:362px;top:226px;width:850px;height:157px;background:#fff;"></div>
<div class="b" style="left:362px;top:226px;width:92px;height:10px;background:#f0f0f0;"></div>
<div class="b" style="left:456px;top:226px;width:756px;height:10px;background:#f0f0f0;"></div>
<div class="b" style="left:454px;top:226px;width:1px;height:63px;background:#e3e3e3;"></div>
<div class="b" style="left:362px;top:237px;width:850px;height:1px;background:#e3e3e3;"></div>
<div class="b" style="left:362px;top:238px;width:92px;height:50px;background:#f1f1f1;"></div>
<div class="b" style="left:456px;top:238px;width:49px;height:50px;background:#f7f7f7;"></div>
<div class="b" style="left:506px;top:238px;width:74px;height:50px;background:#f7f7f7;"></div>
<div class="b" style="left:581px;top:238px;width:50px;height:50px;background:#f7f7f7;"></div>
<div class="b" style="left:632px;top:238px;width:98px;height:50px;background:#f7f7f7;"></div>
<div class="b" style="left:731px;top:238px;width:71px;height:50px;background:#f7f7f7;"></div>
<div class="b" style="left:803px;top:238px;width:74px;height:50px;background:#f7f7f7;"></div>
<div class="b" style="left:878px;top:238px;width:41px;height:50px;background:#f7f7f7;"></div>
<div class="b" style="left:920px;top:238px;width:64px;height:50px;background:#f7f7f7;"></div>
<div class="b" style="left:985px;top:238px;width:36px;height:50px;background:#f7f7f7;"></div>
<div class="b" style="left:1022px;top:238px;width:66px;height:50px;background:#f7f7f7;"></div>
<div class="b" style="left:1089px;top:238px;width:73px;height:50px;background:#f7f7f7;"></div>
<div class="b" style="left:1163px;top:238px;width:49px;height:50px;background:#f7f7f7;"></div>
<div class="b" style="left:362px;top:289px;width:850px;height:1px;background:#e3e3e3;"></div>
<div class="b" style="left:362px;top:290px;width:11px;height:25px;background:#efefef;"></div>
<div class="b" style="left:373px;top:290px;width:1px;height:93px;background:#e3e3e3;"></div>
<div class="b" style="left:374px;top:290px;width:80px;height:25px;background:#f0f0f0;"></div>
<div class="b" style="left:454px;top:290px;width:1px;height:93px;background:#e3e3e3;"></div>
<div class="b" style="left:455px;top:290px;width:50px;height:25px;background:#f7f7f7;"></div>
<div class="b" style="left:505px;top:290px;width:1px;height:25px;background:#e3e3e3;"></div>
<div class="b" style="left:506px;top:290px;width:74px;height:25px;background:#f7f7f7;"></div>
<div class="b" style="left:580px;top:290px;width:1px;height:25px;background:#e3e3e3;"></div>
<div class="b" style="left:581px;top:290px;width:50px;height:25px;background:#f7f7f7;"></div>
<div class="b" style="left:631px;top:290px;width:1px;height:25px;background:#e3e3e3;"></div>
<div class="b" style="left:632px;top:290px;width:98px;height:25px;background:#f7f7f7;"></div>
<div class="b" style="left:730px;top:290px;width:1px;height:25px;background:#e3e3e3;"></div>
<div class="b" style="left:731px;top:290px;width:71px;height:25px;background:#f7f7f7;"></div>
<div class="b" style="left:802px;top:290px;width:1px;height:25px;background:#e3e3e3;"></div>
<div class="b" style="left:803px;top:290px;width:74px;height:25px;background:#f7f7f7;"></div>
<div class="b" style="left:877px;top:290px;width:1px;height:25px;background:#e3e3e3;"></div>
<div class="b" style="left:878px;top:290px;width:41px;height:25px;background:#f7f7f7;"></div>
<div class="b" style="left:919px;top:290px;width:1px;height:25px;background:#e3e3e3;"></div>
<div class="b" style="left:920px;top:290px;width:64px;height:25px;background:#f7f7f7;"></div>
<div class="b" style="left:984px;top:290px;width:1px;height:25px;background:#e3e3e3;"></div>
<div class="b" style="left:985px;top:290px;width:36px;height:25px;background:#f7f7f7;"></div>
<div class="b" style="left:1021px;top:290px;width:1px;height:25px;background:#e3e3e3;"></div>
<div class="b" style="left:1022px;top:290px;width:66px;height:25px;background:#f7f7f7;"></div>
<div class="b" style="left:1088px;top:290px;width:1px;height:25px;background:#e3e3e3;"></div>
<div class="b" style="left:1089px;top:290px;width:73px;height:25px;background:#f7f7f7;"></div>
<div class="b" style="left:1162px;top:290px;width:1px;height:25px;background:#e3e3e3;"></div>
<div class="b" style="left:1163px;top:290px;width:49px;height:25px;background:#f7f7f7;"></div>
<div class="b" style="left:362px;top:315px;width:850px;height:1px;background:#e3e3e3;"></div>
<div class="b" style="left:362px;top:316px;width:10px;height:67px;background:#efefef;"></div>
<div class="b" style="left:372px;top:316px;width:1px;height:67px;background:#ffffff;"></div>
<div class="b" style="left:374px;top:316px;width:80px;height:21px;background:#f9f9f9;"></div>
<div class="b" style="left:455px;top:316px;width:757px;height:21px;background:#fafafa;"></div>
<div class="b" style="left:374px;top:337px;width:838px;height:1px;background:#ffffff;"></div>
<div class="b" style="left:374px;top:338px;width:838px;height:1px;background:#e8e8e8;"></div>
<div class="t" style="left:379.00px;top:323.39px;font-size:10px;line-height:11.5px;color:#222;font-weight:700;">Male</div>
<div class="t" style="left:454px;width:42px;text-align:right;top:322.00px;font-size:10px;line-height:13px;color:#222;">1,358</div>
<div class="t" style="left:505px;width:66px;text-align:right;top:322.00px;font-size:10px;line-height:13px;color:#222;">1,735</div>
<div class="t" style="left:580px;width:42px;text-align:right;top:322.00px;font-size:10px;line-height:13px;color:#222;">231</div>
<div class="t" style="left:631px;width:90px;text-align:right;top:322.00px;font-size:10px;line-height:13px;color:#222;">11,072</div>
<div class="t" style="left:730px;width:63px;text-align:right;top:322.00px;font-size:10px;line-height:13px;color:#222;">2,079</div>
<div class="t" style="left:802px;width:66px;text-align:right;top:322.00px;font-size:10px;line-height:13px;color:#222;">3,114</div>
<div class="t" style="left:877px;width:33px;text-align:right;top:322.00px;font-size:10px;line-height:13px;color:#222;">1,176</div>
<div class="t" style="left:919px;width:56px;text-align:right;top:322.00px;font-size:10px;line-height:13px;color:#222;">5,296</div>
<div class="t" style="left:984px;width:28px;text-align:right;top:322.00px;font-size:10px;line-height:13px;color:#222;">161</div>
<div class="t" style="left:1021px;width:58px;text-align:right;top:322.00px;font-size:10px;line-height:13px;color:#222;">16,935</div>
<div class="t" style="left:1088px;width:65px;text-align:right;top:322.00px;font-size:10px;line-height:13px;color:#222;">2,863</div>
<div class="t" style="left:1162px;width:40px;text-align:right;top:322.00px;font-size:10px;line-height:13px;color:#222;">46,020</div>
<div class="b" style="left:374px;top:339px;width:80px;height:21px;background:#f9f9f9;"></div>
<div class="b" style="left:455px;top:339px;width:757px;height:21px;background:#ffffff;"></div>
<div class="b" style="left:374px;top:360px;width:838px;height:1px;background:#ffffff;"></div>
<div class="b" style="left:374px;top:361px;width:838px;height:1px;background:#e8e8e8;"></div>
<div class="t" style="left:379.00px;top:345.39px;font-size:10px;line-height:11.5px;color:#222;font-weight:700;">Female</div>
<div class="t" style="left:454px;width:42px;text-align:right;top:344.00px;font-size:10px;line-height:13px;color:#222;">3,701</div>
<div class="t" style="left:505px;width:66px;text-align:right;top:344.00px;font-size:10px;line-height:13px;color:#222;">923</div>
<div class="t" style="left:580px;width:42px;text-align:right;top:344.00px;font-size:10px;line-height:13px;color:#222;">18,854</div>
<div class="t" style="left:631px;width:90px;text-align:right;top:344.00px;font-size:10px;line-height:13px;color:#222;">11,653</div>
<div class="t" style="left:730px;width:63px;text-align:right;top:344.00px;font-size:10px;line-height:13px;color:#222;">364</div>
<div class="t" style="left:802px;width:66px;text-align:right;top:344.00px;font-size:10px;line-height:13px;color:#222;">3,745</div>
<div class="t" style="left:877px;width:33px;text-align:right;top:344.00px;font-size:10px;line-height:13px;color:#222;">2,548</div>
<div class="t" style="left:919px;width:56px;text-align:right;top:344.00px;font-size:10px;line-height:13px;color:#222;">1,756</div>
<div class="t" style="left:984px;width:28px;text-align:right;top:344.00px;font-size:10px;line-height:13px;color:#222;">294</div>
<div class="t" style="left:1021px;width:58px;text-align:right;top:344.00px;font-size:10px;line-height:13px;color:#222;">3,129</div>
<div class="t" style="left:1088px;width:65px;text-align:right;top:344.00px;font-size:10px;line-height:13px;color:#222;">2,233</div>
<div class="t" style="left:1162px;width:40px;text-align:right;top:344.00px;font-size:10px;line-height:13px;color:#222;">49,200</div>
<div class="b" style="left:374px;top:362px;width:80px;height:21px;background:#f9f9f9;"></div>
<div class="b" style="left:455px;top:362px;width:757px;height:21px;background:#fafafa;"></div>
<div class="b" style="left:374px;top:383px;width:838px;height:1px;background:#ffffff;"></div>
<div class="t" style="left:379.00px;top:367.79px;font-size:10px;line-height:11.5px;color:#222;font-weight:700;">Total</div>
<div class="t" style="left:454px;width:42px;text-align:right;top:366.40px;font-size:10px;line-height:13px;color:#222;">5,059</div>
<div class="t" style="left:505px;width:66px;text-align:right;top:366.40px;font-size:10px;line-height:13px;color:#222;">2,658</div>
<div class="t" style="left:580px;width:42px;text-align:right;top:366.40px;font-size:10px;line-height:13px;color:#222;">19,085</div>
<div class="t" style="left:631px;width:90px;text-align:right;top:366.40px;font-size:10px;line-height:13px;color:#222;">22,725</div>
<div class="t" style="left:730px;width:63px;text-align:right;top:366.40px;font-size:10px;line-height:13px;color:#222;">2,443</div>
<div class="t" style="left:802px;width:66px;text-align:right;top:366.40px;font-size:10px;line-height:13px;color:#222;">6,859</div>
<div class="t" style="left:877px;width:33px;text-align:right;top:366.40px;font-size:10px;line-height:13px;color:#222;">3,724</div>
<div class="t" style="left:919px;width:56px;text-align:right;top:366.40px;font-size:10px;line-height:13px;color:#222;">7,052</div>
<div class="t" style="left:984px;width:28px;text-align:right;top:366.40px;font-size:10px;line-height:13px;color:#222;">455</div>
<div class="t" style="left:1021px;width:58px;text-align:right;top:366.40px;font-size:10px;line-height:13px;color:#222;">20,064</div>
<div class="t" style="left:1088px;width:65px;text-align:right;top:366.40px;font-size:10px;line-height:13px;color:#222;">5,096</div>
<div class="t" style="left:1162px;width:40px;text-align:right;top:366.40px;font-size:10px;line-height:13px;color:#222;">95,220</div>
<div class="b" style="left:362px;top:383px;width:850px;height:1px;background:#efefef;"></div>
<div class="b" style="left:1211px;top:316px;width:1px;height:67px;background:#f0f0f0;"></div>
<div class="t" style="left:455px;width:50px;text-align:center;top:258.20px;font-size:10px;line-height:11px;font-weight:700;color:#3a3a3a;">Clerical</div>
<div class="t" style="left:506px;width:74px;text-align:center;top:252.70px;font-size:10px;line-height:11px;font-weight:700;color:#3a3a3a;">Executive &amp;<br>Managerial</div>
<div class="t" style="left:581px;width:50px;text-align:center;top:252.70px;font-size:10px;line-height:11px;font-weight:700;color:#3a3a3a;">Home<br>Duties</div>
<div class="t" style="left:632px;width:98px;text-align:center;top:241.70px;font-size:10px;line-height:11px;font-weight:700;color:#3a3a3a;">Independent<br>Means; Retired;<br>Pensioner;<br>Unemployed</div>
<div class="t" style="left:731px;width:71px;text-align:center;top:252.70px;font-size:10px;line-height:11px;font-weight:700;color:#3a3a3a;">Primary<br>production</div>
<div class="t" style="left:803px;width:74px;text-align:center;top:258.20px;font-size:10px;line-height:11px;font-weight:700;color:#3a3a3a;">Professional</div>
<div class="t" style="left:878px;width:41px;text-align:center;top:258.20px;font-size:10px;line-height:11px;font-weight:700;color:#3a3a3a;">Sales</div>
<div class="t" style="left:920px;width:64px;text-align:center;top:252.70px;font-size:10px;line-height:11px;font-weight:700;color:#3a3a3a;">Self<br>employed</div>
<div class="t" style="left:985px;width:36px;text-align:center;top:258.20px;font-size:10px;line-height:11px;font-weight:700;color:#3a3a3a;">Staff</div>
<div class="t" style="left:1022px;width:66px;text-align:center;top:258.20px;font-size:10px;line-height:11px;font-weight:700;color:#3a3a3a;">Tradesmen</div>
<div class="t" style="left:1089px;width:73px;text-align:center;top:252.70px;font-size:10px;line-height:11px;font-weight:700;color:#3a3a3a;">Transport &amp;<br>Recreation</div>
<div class="t" style="left:1163px;width:49px;text-align:center;top:258.20px;font-size:10px;line-height:11px;font-weight:700;color:#3a3a3a;">Total</div>
<div class="t" style="left:387.00px;top:258.89px;font-size:10px;line-height:11.5px;color:#333;font-weight:700;">Occupation</div>
<svg class="b" style="left:447px;top:257.5px;" width="4" height="11" viewBox="0 0 4 11"><circle cx="2" cy="1.5" r="1.3" fill="#777"/><circle cx="2" cy="5.5" r="1.3" fill="#777"/><circle cx="2" cy="9.5" r="1.3" fill="#777"/></svg>
<div class="t" style="left:379.40px;top:297.39px;font-size:10px;line-height:11.5px;color:#333;font-weight:700;">Gender</div>
<div class="t" style="left:413.5px;top:296.9px;line-height:10px;"><svg width="11" height="10" viewBox="0 0 11 10" style="vertical-align:-1px;margin-left:3px"><ellipse cx="5.5" cy="5" rx="5.5" ry="5" fill="#93b7e0"/><rect x="4.6" y="3.6" width="2" height="5.2" fill="#2d4f7d"/><rect x="4.6" y="0.6" width="2" height="1.6" fill="#2d4f7d"/></svg></div>
<svg class="b" style="left:431.6px;top:296.6px;" width="10" height="12" viewBox="0 0 10 12"><polygon points="0.6,5.3 5,0.4 9.4,5.3" fill="#c9c9c9"/><polygon points="0.6,6.3 5,11.3 9.4,6.3" fill="#c9c9c9"/></svg>
<svg class="b" style="left:447px;top:297.2px;" width="4" height="11" viewBox="0 0 4 11"><circle cx="2" cy="1.5" r="1.3" fill="#777"/><circle cx="2" cy="5.5" r="1.3" fill="#777"/><circle cx="2" cy="9.5" r="1.3" fill="#777"/></svg>
<svg class="b" style="left:472.3px;top:296.6px;" width="10" height="12" viewBox="0 0 10 12"><polygon points="0.6,5.3 5,0.4 9.4,5.3" fill="#c9c9c9"/><polygon points="0.6,6.3 5,11.3 9.4,6.3" fill="#c9c9c9"/></svg>
<svg class="b" style="left:535.3px;top:296.6px;" width="10" height="12" viewBox="0 0 10 12"><polygon points="0.6,5.3 5,0.4 9.4,5.3" fill="#c9c9c9"/><polygon points="0.6,6.3 5,11.3 9.4,6.3" fill="#c9c9c9"/></svg>
<svg class="b" style="left:598.3px;top:296.6px;" width="10" height="12" viewBox="0 0 10 12"><polygon points="0.6,5.3 5,0.4 9.4,5.3" fill="#c9c9c9"/><polygon points="0.6,6.3 5,11.3 9.4,6.3" fill="#c9c9c9"/></svg>
<svg class="b" style="left:673.3px;top:296.6px;" width="10" height="12" viewBox="0 0 10 12"><polygon points="0.6,5.3 5,0.4 9.4,5.3" fill="#c9c9c9"/><polygon points="0.6,6.3 5,11.3 9.4,6.3" fill="#c9c9c9"/></svg>
<svg class="b" style="left:758.8px;top:296.6px;" width="10" height="12" viewBox="0 0 10 12"><polygon points="0.6,5.3 5,0.4 9.4,5.3" fill="#c9c9c9"/><polygon points="0.6,6.3 5,11.3 9.4,6.3" fill="#c9c9c9"/></svg>
<svg class="b" style="left:832.3px;top:296.6px;" width="10" height="12" viewBox="0 0 10 12"><polygon points="0.6,5.3 5,0.4 9.4,5.3" fill="#c9c9c9"/><polygon points="0.6,6.3 5,11.3 9.4,6.3" fill="#c9c9c9"/></svg>
<svg class="b" style="left:890.8px;top:296.6px;" width="10" height="12" viewBox="0 0 10 12"><polygon points="0.6,5.3 5,0.4 9.4,5.3" fill="#c9c9c9"/><polygon points="0.6,6.3 5,11.3 9.4,6.3" fill="#c9c9c9"/></svg>
<svg class="b" style="left:944.3px;top:296.6px;" width="10" height="12" viewBox="0 0 10 12"><polygon points="0.6,5.3 5,0.4 9.4,5.3" fill="#c9c9c9"/><polygon points="0.6,6.3 5,11.3 9.4,6.3" fill="#c9c9c9"/></svg>
<svg class="b" style="left:995.3px;top:296.6px;" width="10" height="12" viewBox="0 0 10 12"><polygon points="0.6,5.3 5,0.4 9.4,5.3" fill="#c9c9c9"/><polygon points="0.6,6.3 5,11.3 9.4,6.3" fill="#c9c9c9"/></svg>
<svg class="b" style="left:1047.3px;top:296.6px;" width="10" height="12" viewBox="0 0 10 12"><polygon points="0.6,5.3 5,0.4 9.4,5.3" fill="#c9c9c9"/><polygon points="0.6,6.3 5,11.3 9.4,6.3" fill="#c9c9c9"/></svg>
<svg class="b" style="left:1117.8px;top:296.6px;" width="10" height="12" viewBox="0 0 10 12"><polygon points="0.6,5.3 5,0.4 9.4,5.3" fill="#c9c9c9"/><polygon points="0.6,6.3 5,11.3 9.4,6.3" fill="#c9c9c9"/></svg>
<svg class="b" style="left:1179.8px;top:296.6px;" width="10" height="12" viewBox="0 0 10 12"><polygon points="0.6,5.3 5,0.4 9.4,5.3" fill="#c9c9c9"/><polygon points="0.6,6.3 5,11.3 9.4,6.3" fill="#c9c9c9"/></svg>
<div class="t" style="left:362.20px;top:392.99px;font-size:10px;line-height:11.5px;color:#444;letter-spacing:-0.06px;">Dataset : WingArc Australia synthetic data</div>
<div class="t" style="left:362.20px;top:408.99px;font-size:10px;line-height:11.5px;color:#444;">For further information see <span style="text-decoration:underline;">Data Confidentiality</span></div>
<div class="b" style="left:1px;top:538px;width:1220px;height:22px;background:#3a6cb3;"></div>
<div class="t" style="left:897.80px;top:544.63px;font-size:8px;line-height:9.2px;color:#fff;">Feedback</div>
<div class="t" style="left:947.70px;top:544.63px;font-size:8px;line-height:9.2px;color:#fff;">Enquiry</div>
<div class="t" style="left:989.40px;top:544.63px;font-size:8px;line-height:9.2px;color:#fff;">Need Help?</div>
<div class="t" style="left:1046.70px;top:544.63px;font-size:8px;line-height:9.2px;color:#fff;">Training</div>
<div class="t" style="left:1080px;width:112px;text-align:right;top:539.9px;font-size:8px;line-height:9px;color:#fff;">Powered by SuperSTAR</div>
<div class="t" style="left:1080px;width:112px;text-align:right;top:549.4px;font-size:8px;line-height:9px;color:#fff;">WingArc Australia</div>
<svg class="b" style="left:1198px;top:540px;" width="22" height="19" viewBox="0 0 22 19"><path d="M3.2,2.2 Q3.4,1.6 4.2,1.6 L7,1.6 Q7.6,1.6 7.5,2.3 L6.2,15.2 Q6.1,15.9 5.4,15.9 L2.6,15.9 Q1.8,15.9 1.9,15.2Z" fill="#c42a2a"/><path d="M4.6,4.2 L6.3,3.4 L5.2,14.2 L3.7,14.2 L4.5,6 L3.6,6.4Z" fill="#f2eaea"/><text transform="translate(7.9,13.6) scale(0.72,1)" x="0" y="0" font-family="Liberation Sans" font-style="italic" font-weight="700" font-size="8.6" fill="#1b2b4d">ST</text></svg>
</body></html>
